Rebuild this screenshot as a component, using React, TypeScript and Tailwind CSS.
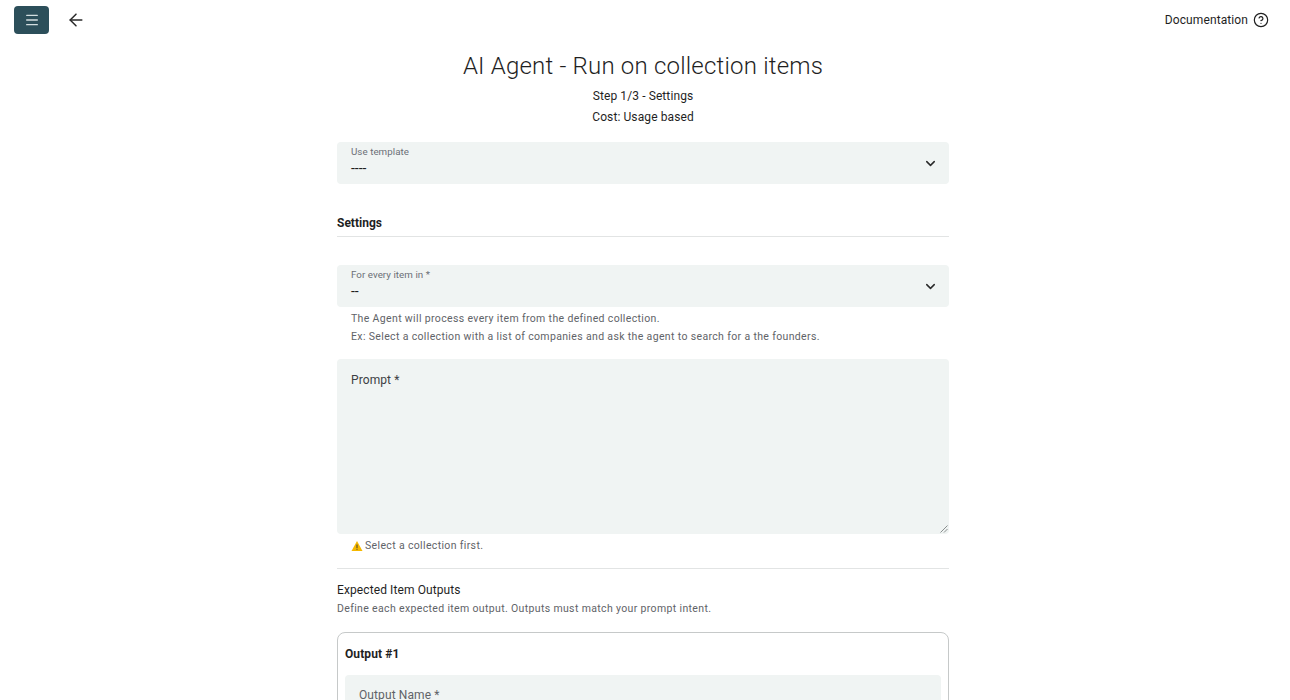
import { ArrowLeft, ChevronDown, CircleHelp, Menu } from "lucide-react";

function SelectField({ label, value }: { label: string; value: string }) {
  return (
    <div className="relative h-[42px] rounded-[4px] bg-[#f0f4f3] px-3.5">
      <p className="pt-[4px] text-[9.75px] leading-[12px] tracking-[0.05px] text-[#6b6f76]">{label}</p>
      <p className="mt-[2px] text-[14px] leading-[16px] text-[#1f1f1f]">{value}</p>
      <ChevronDown className="absolute right-[11px] top-[14px] h-[15px] w-[15px] text-[#2a2a2a]" strokeWidth={2.4} />
    </div>
  );
}

export default function App() {
  return (
    <div className="h-[700px] overflow-hidden bg-white font-['Roboto',sans-serif] text-[#1f1f1f]">
      {/* Top bar */}
      <header className="flex h-[40px] items-center justify-between pl-[14px] pr-[21px]">
        <div className="flex items-center gap-[17px]">
          <button className="flex h-[28px] w-[35px] items-center justify-center rounded-[4px] bg-[#2c4f5a]">
            <Menu className="h-[16px] w-[16px] text-[#d3dee0]" strokeWidth={2} />
          </button>
          <ArrowLeft className="h-[20px] w-[20px] text-[#2a2a2a]" strokeWidth={1.8} />
        </div>
        <div className="flex items-center gap-[5px]">
          <span className="text-[12px] leading-[16px] tracking-[0.1px]">Documentation</span>
          <CircleHelp className="h-[16px] w-[16px]" strokeWidth={1.8} />
        </div>
      </header>

      <div className="w-[1286px]">
        {/* Heading */}
        <div className="mt-[9px] text-center">
          <h1 className="text-[24px] font-light leading-[34px] tracking-[0.2px]">AI Agent - Run on collection items</h1>
          <p className="mt-[3px] text-[12px] leading-[21px] tracking-[0.1px]">Step 1/3 - Settings</p>
          <p className="text-[12px] leading-[21px] tracking-[0.1px]">Cost: Usage based</p>
        </div>

        <main className="mx-auto mt-[14px] w-[612px]">
          <SelectField label="Use template" value="----" />

          <h2 className="mt-[32px] border-b border-[#e2e4e4] pb-[5px] text-[12px] font-bold leading-[15px]">Settings</h2>

          <div className="mt-[28px]">
            <SelectField label="For every item in *" value="--" />
          </div>
          <div className="mt-[3px] px-3.5 text-[10.5px] leading-[18px] tracking-[0.35px] text-[#5f6368]">
            <p>The Agent will process every item from the defined collection.</p>
            <p>Ex: Select a collection with a list of companies and ask the agent to search for a the founders.</p>
          </div>

          {/* Prompt */}
          <div className="relative mt-[13px] h-[175px] rounded-[4px] bg-[#f0f4f3] px-3.5 pt-[13px]">
            <p className="text-[12px] leading-[16px] tracking-[0.1px] text-[#3c4043]">Prompt *</p>
            <svg className="absolute bottom-[1px] right-[1px] h-[8px] w-[8px] text-[#8a8f8f]" viewBox="0 0 8 8" fill="none" stroke="currentColor" strokeWidth="1">
              <path d="M0.5 7.5 L7.5 0.5 M4 7.5 L7.5 4" />
            </svg>
          </div>
          <div className="mt-[5px] flex items-center gap-[2px] px-3.5 text-[10.5px] leading-[14px] tracking-[0.35px] text-[#5f6368]">
            <svg className="h-[12px] w-[12px] text-[#f5b800]" viewBox="0 0 12 12">
              <path d="M6 1 L11.5 11 H0.5 Z" fill="currentColor" />
              <path d="M5.5 4.5 H6.5 V8 H5.5 Z M5.5 8.8 H6.5 V9.8 H5.5 Z" fill="#3c3c3c" />
            </svg>
            <span>Select a collection first.</span>
          </div>

          <hr className="mt-[15px] border-[#e2e4e4]" />

          <p className="mt-[13px] text-[12px] leading-[16px] tracking-[0.1px]">Expected Item Outputs</p>
          <p className="mt-[4px] text-[10.5px] leading-[14px] tracking-[0.35px] text-[#5f6368]">
            Define each expected item output. Outputs must match your prompt intent.
          </p>

          {/* Output card */}
          <div className="mt-[16px] rounded-t-[8px] border border-[#c6c9c9] px-[7px] pt-[13px]">
            <p className="text-[12px] font-bold leading-[16px] tracking-[0.1px]">Output #1</p>
            <div className="mt-[13px] h-[60px] rounded-[4px] bg-[#f0f4f3] px-3.5 pt-[12px]">
              <p className="text-[12px] leading-[16px] tracking-[0.1px] text-[#5f6368]">Output Name *</p>
            </div>
          </div>
        </main>
      </div>
    </div>
  );
}
